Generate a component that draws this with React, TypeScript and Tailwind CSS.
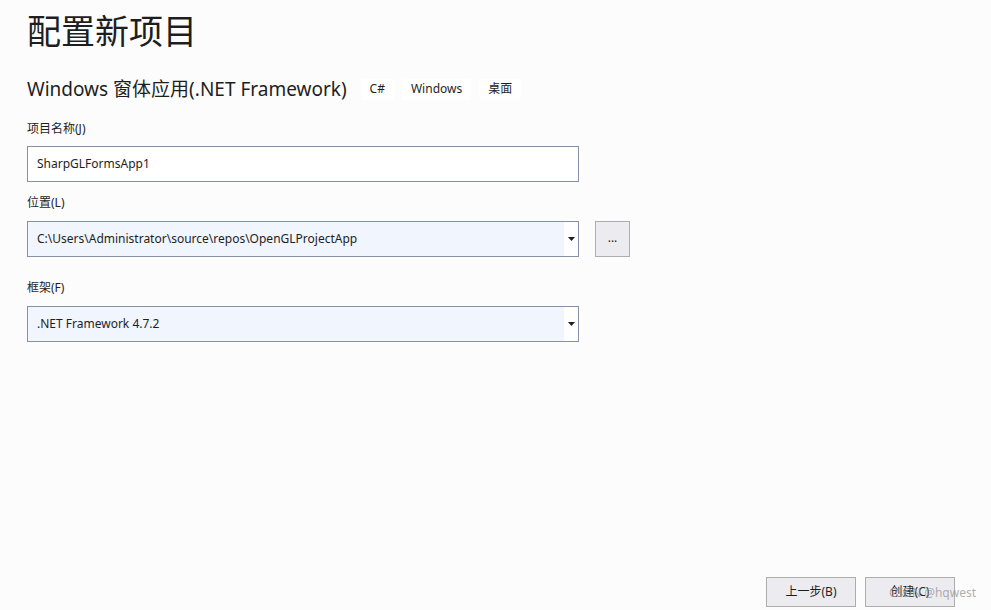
const font = "font-['Noto_Sans','Noto_Sans_CJK_SC',sans-serif]";

function Tag({ children }: { children: React.ReactNode }) {
  return (
    <span className="flex h-[21px] items-center rounded-[4px] bg-white px-[9px] text-[12px] text-[#1e1e1e]">
      {children}
    </span>
  );
}

function Label({ children, className }: { children: React.ReactNode; className?: string }) {
  return <div className={"h-[16px] text-[12px] leading-[16px] text-[#1e1e1e] " + (className ?? "")}>{children}</div>;
}

function Select({ value }: { value: string }) {
  return (
    <div className="flex h-[36px] w-[552px] border border-[#8592a5] bg-white">
      <div className="flex flex-1 items-center bg-[#f1f5fe] pl-[9px] text-[12px] text-[#1e1e1e]">{value}</div>
      <div className="flex w-[14px] items-center justify-center">
        <svg width="7" height="5" viewBox="0 0 7 5">
          <path d="M0 0H7L3.5 4Z" fill="#1e1e1e" />
        </svg>
      </div>
    </div>
  );
}

export default function App() {
  return (
    <div className={"relative h-[610px] w-[991px] overflow-hidden bg-[#fcfcfc] pl-[27px] " + font}>
      <h1 className="mt-[11px] h-[40px] text-[34px] leading-[40px] font-normal text-[#1e1e1e]">配置新项目</h1>

      <div className="mt-[26px] flex h-[24px] items-center gap-[8px]">
        <span className="mr-[6px] text-[19px] leading-[24px] text-[#1e1e1e]">Windows 窗体应用(.NET Framework)</span>
        <Tag>C#</Tag>
        <Tag>Windows</Tag>
        <Tag>桌面</Tag>
      </div>

      <Label className="mt-[20px]">项目名称(J)</Label>
      <div className="mt-[9px] flex h-[36px] w-[552px] items-center border border-[#8592a5] bg-white pl-[9px] text-[12px] text-[#1e1e1e]">
        SharpGLFormsApp1
      </div>

      <Label className="mt-[13px]">位置(L)</Label>
      <div className="mt-[10px] flex items-center gap-[16px]">
        <Select value="C:\Users\Administrator\source\repos\OpenGLProjectApp" />
        <button className="flex h-[36px] w-[35px] items-center justify-center border border-[#adadad] bg-[#ececf0] pb-[2px] text-[12px] text-[#1e1e1e]">
          ...
        </button>
      </div>

      <Label className="mt-[23px]">框架(F)</Label>
      <div className="mt-[10px]">
        <Select value=".NET Framework 4.7.2" />
      </div>

      <div className="absolute bottom-[3px] right-[36px] flex gap-[9px]">
        <button className="h-[30px] w-[90px] border border-[#adadad] bg-[#ececf0] text-[12px] text-[#1e1e1e]">上一步(B)</button>
        <button className="h-[30px] w-[90px] border border-[#adadad] bg-[#ececf0] text-[12px] text-[#1e1e1e]">创建(C)</button>
      </div>
      <div className="pointer-events-none absolute right-[15px] bottom-[8px] text-[12px] text-[#9a9a9a]/80">CSDN @hqwest</div>
    </div>
  );
}
